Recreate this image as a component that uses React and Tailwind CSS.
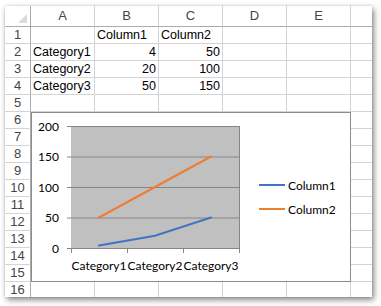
import React from 'react';

const colWidths = ['w-[64px]', 'w-[64px]', 'w-[64px]', 'w-[64px]', 'w-[64px]'];
const letters = ['A', 'B', 'C', 'D', 'E'];

const cells = {
  1: ['', 'Column1', 'Column2', '', ''],
  2: ['Category1', 4, 50, '', ''],
  3: ['Category2', 20, 100, '', ''],
  4: ['Category3', 50, 150, '', ''],
};

const rows = Array.from({ length: 16 }, (_, i) => i + 1);

function Cell({ value, width }) {
  const isNum = typeof value === 'number';
  return (
    <div
      className={`${width} h-full shrink-0 border-r border-b border-[#d4d4d4] px-[2px] flex items-center overflow-visible whitespace-nowrap ${
        isNum ? 'justify-end' : 'justify-start'
      }`}
    >
      {value}
    </div>
  );
}

function Chart() {
  const plot = { x0: 40, x1: 208, y0: 14, y1: 136 };
  const y = (v) => plot.y1 - (v / 200) * (plot.y1 - plot.y0);
  const cx = [68, 124, 180];
  const col1 = [4, 20, 50];
  const col2 = [50, 100, 150];
  const ticks = [0, 50, 100, 150, 200];
  const font = "Lato, 'Open Sans', sans-serif";

  return (
    <div className="absolute left-[26px] top-[106px] w-[320px] h-[170px] bg-white border border-[#8c8c8c]">
      <svg width="318" height="168" viewBox="1 1 318 168" className="block">
        <rect x={plot.x0} y={plot.y0} width={plot.x1 - plot.x0} height={plot.y1 - plot.y0} fill="#c0c0c0" />
        {ticks.map((t) => (
          <g key={t}>
            <line x1={plot.x0 - 4} x2={plot.x1} y1={y(t) + 0.5} y2={y(t) + 0.5} stroke="#868686" strokeWidth="1" />
            <text x="28" y={y(t) + 4.5} textAnchor="end" fontFamily={font} fontSize="12" fill="#000">
              {t}
            </text>
          </g>
        ))}
        <line x1={plot.x1 + 0.5} x2={plot.x1 + 0.5} y1={plot.y0} y2={plot.y1} stroke="#868686" />
        {[plot.x0, 96, 152, plot.x1].map((x) => (
          <line key={x} x1={x + 0.5} x2={x + 0.5} y1={plot.y1} y2={plot.y1 + 5} stroke="#868686" />
        ))}
        <polyline
          points={cx.map((x, i) => `${x},${y(col2[i])}`).join(' ')}
          fill="none"
          stroke="#ed7d31"
          strokeWidth="2"
          strokeLinecap="round"
        />
        <polyline
          points={cx.map((x, i) => `${x},${y(col1[i])}`).join(' ')}
          fill="none"
          stroke="#4472c4"
          strokeWidth="2"
          strokeLinecap="round"
        />
        {['Category1', 'Category2', 'Category3'].map((c, i) => (
          <text
            key={c}
            x={cx[i] - 27.5}
            y="158"
            textLength="55"
            lengthAdjust="spacingAndGlyphs"
            fontFamily={font}
            fontSize="12"
            fill="#000"
          >
            {c}
          </text>
        ))}
        <line x1="228" x2="254" y1="73" y2="73" stroke="#4472c4" strokeWidth="2" />
        <text x="257" y="77.5" fontFamily={font} fontSize="12" fill="#000">
          Column1
        </text>
        <line x1="228" x2="254" y1="97" y2="97" stroke="#ed7d31" strokeWidth="2" />
        <text x="257" y="101.5" fontFamily={font} fontSize="12" fill="#000">
          Column2
        </text>
      </svg>
    </div>
  );
}

export default function App() {
  return (
    <div className="w-[381px] h-[306px] bg-white overflow-hidden pl-[5px] pt-[6px]">
      <div
        className="relative w-[367px] h-[291px] bg-white overflow-hidden shadow-[2px_3px_6px_rgba(0,0,0,0.45),0_0_3px_rgba(0,0,0,0.15)] text-[12.5px] text-black"
        style={{ fontFamily: "'Liberation Sans', Arial, sans-serif" }}
      >
        {/* column headers */}
        <div className="flex h-[21px] text-[#444] text-[13px]">
          <div className="relative w-[26px] shrink-0 border-r border-b border-[#ababab]">
            <div className="absolute right-[3px] bottom-[3px] w-0 h-0 border-l-[9px] border-l-transparent border-b-[9px] border-b-[#dadada]" />
          </div>
          {letters.map((l, i) => (
            <div
              key={l}
              className={`${colWidths[i]} shrink-0 border-r border-r-[#d4d4d4] border-b border-b-[#ababab] flex items-center justify-center`}
            >
              {l}
            </div>
          ))}
          <div className="flex-1 border-b border-[#ababab]" />
        </div>

        {rows.map((r) => (
          <div key={r} className="flex h-[17px]">
            <div className="w-[26px] shrink-0 border-r border-r-[#ababab] border-b border-b-[#d4d4d4] flex items-center justify-center text-[#444] text-[13px]">
              {r}
            </div>
            {letters.map((l, i) => (
              <Cell key={l} width={colWidths[i]} value={cells[r] ? cells[r][i] : ''} />
            ))}
            <div className="flex-1 border-b border-[#d4d4d4]" />
          </div>
        ))}

        <Chart />
      </div>
    </div>
  );
}
